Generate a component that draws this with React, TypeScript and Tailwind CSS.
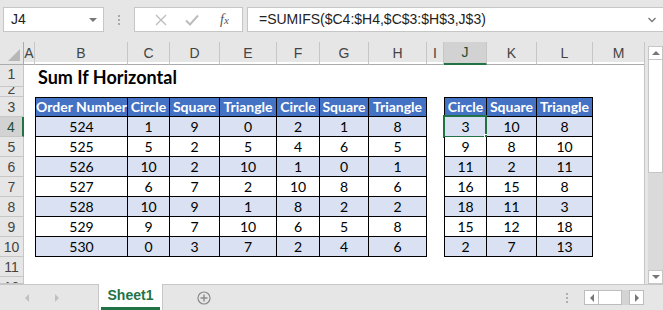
import React from "react";

const COLS =
  "grid grid-cols-[24px_11px_93px_42px_50px_57px_43px_49px_58px_17px_43px_50px_56px_52px]";
const LETTERS = ["A", "B", "C", "D", "E", "F", "G", "H", "I", "J", "K", "L", "M"];

const heads1 = ["Order Number", "Circle", "Square", "Triangle", "Circle", "Square", "Triangle"];
const heads2 = ["Circle", "Square", "Triangle"];

const data1 = [
  [524, 1, 9, 0, 2, 1, 8],
  [525, 5, 2, 5, 4, 6, 5],
  [526, 10, 2, 10, 1, 0, 1],
  [527, 6, 7, 2, 10, 8, 6],
  [528, 10, 9, 1, 8, 2, 2],
  [529, 9, 7, 10, 6, 5, 8],
  [530, 0, 3, 7, 2, 4, 6],
];
const data2 = [
  [3, 10, 8],
  [9, 8, 10],
  [11, 2, 11],
  [16, 15, 8],
  [18, 11, 3],
  [15, 12, 18],
  [2, 7, 13],
];

const rows = [
  { n: 1, h: "h-[25px]", a: "items-center" },
  { n: 2, h: "h-[10px]", a: "items-end" },
  { n: 3, h: "h-[20px]", a: "items-center" },
  { n: 4, h: "h-[20px]", a: "items-center" },
  { n: 5, h: "h-[20px]", a: "items-center" },
  { n: 6, h: "h-[20px]", a: "items-center" },
  { n: 7, h: "h-[20px]", a: "items-center" },
  { n: 8, h: "h-[20px]", a: "items-center" },
  { n: 9, h: "h-[20px]", a: "items-center" },
  { n: 10, h: "h-[20px]", a: "items-center" },
  { n: 11, h: "h-[20px]", a: "items-center" },
  { n: 12, h: "h-[7px]", a: "items-start pt-[3px]" },
];

const calibri = "font-['Lato','Liberation_Sans',sans-serif]";
const ui = "font-['Liberation_Sans','DejaVu_Sans',sans-serif]";

function Cell({ row, col }: { row: number; col: number }) {
  // col: 0 = A ... 12 = M
  const inT1 = col >= 1 && col <= 7 && row >= 3 && row <= 10;
  const inT2 = col >= 9 && col <= 11 && row >= 3 && row <= 10;

  if (row === 1 && col === 1) {
    return (
      <div className="relative">
        <span className={`absolute left-[3px] top-[2px] whitespace-nowrap text-[18px] font-bold text-black ${calibri}`}>
          Sum If Horizontal
        </span>
      </div>
    );
  }

  if (!inT1 && !inT2) return <div />;

  const first = col === 1 || col === 9;
  const header = row === 3;
  const stripe = row % 2 === 0;
  let text: string | number = "";
  if (inT1) text = header ? heads1[col - 1] : data1[row - 4][col - 1];
  if (inT2) text = header ? heads2[col - 9] : data2[row - 4][col - 9];

  const bg = header ? "bg-[#4472c4] text-white font-bold" : stripe ? "bg-[#d9e1f2] text-black" : "bg-white text-black";
  const selected = row === 4 && col === 9;

  return (
    <div
      className={`relative flex items-center justify-center whitespace-nowrap overflow-visible border-b border-r border-black text-[14px] leading-none ${calibri} ${bg} ${
        first ? "border-l" : ""
      } ${header ? "border-t" : ""}`}
    >
      {text}
      {selected && (
        <>
          <div className="absolute -left-[2px] -top-[2px] -right-[1px] -bottom-[2px] border-2 border-[#217346]" />
          <div className="absolute -right-[4px] -bottom-[4px] h-[6px] w-[6px] border border-white bg-[#217346]" />
        </>
      )}
    </div>
  );
}

function TopBar() {
  return (
    <div className={`flex h-[42px] items-start bg-[#e6e6e6] pl-[3px] pt-[7px] text-[14px] ${ui}`}>
      <div className="flex h-[25px] w-[101px] items-center justify-between border border-[#c6c6c6] bg-white pl-[7px] pr-[6px] text-[#222]">
        <span>J4</span>
        <span className="h-0 w-0 border-x-[4px] border-t-[4px] border-x-transparent border-t-[#777]" />
      </div>
      <div className="ml-[14px] mr-[14px] flex h-[25px] flex-col items-center justify-center gap-[2px]">
        <span className="h-[2px] w-[2px] bg-[#aaa]" />
        <span className="h-[2px] w-[2px] bg-[#aaa]" />
        <span className="h-[2px] w-[2px] bg-[#aaa]" />
      </div>
      <div className="flex h-[25px] w-[109px] items-center border border-[#c6c6c6] bg-white">
        <svg width="14" height="14" viewBox="0 0 14 14" className="ml-[19px]">
          <path d="M2 2 L12 12 M12 2 L2 12" stroke="#bdbdbd" strokeWidth="1.4" fill="none" />
        </svg>
        <svg width="16" height="14" viewBox="0 0 16 14" className="ml-[16px]">
          <path d="M2 7.5 L6 11.5 L14 2.5" stroke="#bdbdbd" strokeWidth="2" fill="none" />
        </svg>
        <span className="ml-[20px] font-['Liberation_Serif',serif] text-[14px] italic text-[#555]">
          f<span className="text-[11px]">x</span>
        </span>
      </div>
      <div className="ml-[4px] flex h-[25px] flex-1 items-center justify-between border border-r-0 border-[#c6c6c6] bg-white pl-[11px] pr-[6px] text-[#222]">
        <span>=SUMIFS($C4:$H4,$C$3:$H$3,J$3)</span>
        <svg width="10" height="8" viewBox="0 0 10 8">
          <path d="M1.5 2 L5 5.5 L8.5 2" stroke="#777" strokeWidth="1.3" fill="none" />
        </svg>
      </div>
    </div>
  );
}

function ColumnHeader() {
  return (
    <div className={`${COLS} h-[20px] bg-[#e6e6e6] text-[14px] text-[#444] ${ui}`}>
      <div className="relative border-b border-r border-[#ababab] bg-[#e6e6e6]">
        <div className="absolute bottom-[3px] right-[3px] h-0 w-0 border-b-[12px] border-l-[12px] border-l-transparent border-b-[#b7b7b7]" />
      </div>
      {LETTERS.map((l) => {
        const sel = l === "J";
        return (
          <div
            key={l}
            className={`flex items-center justify-center border-r border-[#c6c6c6] ${
              sel ? "border-b-2 border-b-[#217346] bg-[#d2d2d2] text-[#1e4e33]" : "border-b border-b-[#ababab]"
            }`}
          >
            {l}
          </div>
        );
      })}
    </div>
  );
}

function VScroll() {
  return (
    <div className="flex w-[18px] flex-col bg-[#e6e6e6] pl-[3px] pt-[4px]">
      <div className="flex h-[14px] items-center justify-center border border-[#c6c6c6] bg-white">
        <span className="h-0 w-0 border-x-[4px] border-b-[4px] border-x-transparent border-b-[#777]" />
      </div>
      <div className="h-[113px] border border-t-0 border-[#c6c6c6] bg-white" />
      <div className="flex-1 bg-[#dadada]" />
      <div className="flex h-[14px] items-center justify-center border border-[#c6c6c6] bg-white">
        <span className="h-0 w-0 border-x-[4px] border-t-[4px] border-x-transparent border-t-[#777]" />
      </div>
    </div>
  );
}

function TabBar() {
  return (
    <div className={`flex h-[26px] items-stretch border-t border-[#c6c6c6] bg-[#e6e6e6] ${ui}`}>
      <div className="flex w-[98px] items-center">
        <span className="ml-[25px] h-0 w-0 border-y-[4px] border-r-[4px] border-y-transparent border-r-[#c0c0c0]" />
        <span className="ml-[26px] h-0 w-0 border-y-[4px] border-l-[4px] border-y-transparent border-l-[#c0c0c0]" />
      </div>
      <div className="-mt-px flex w-[65px] flex-col border-x border-[#c6c6c6] bg-white">
        <div className="flex flex-1 items-center justify-center text-[14px] font-bold text-[#217346]">Sheet1</div>
        <div className="mx-[2px] h-[3px] bg-[#217346]" />
      </div>
      <div className="ml-[34px] flex items-center">
        <svg width="14" height="14" viewBox="0 0 14 14">
          <circle cx="7" cy="7" r="6" stroke="#8a8a8a" strokeWidth="1.2" fill="none" />
          <path d="M7 3.5 V10.5 M3.5 7 H10.5" stroke="#8a8a8a" strokeWidth="1.4" />
        </svg>
      </div>
      <div className="flex-1" />
      <div className="flex flex-col items-center justify-center gap-[2px]">
        <span className="h-[2px] w-[2px] bg-[#b0b0b0]" />
        <span className="h-[2px] w-[2px] bg-[#b0b0b0]" />
        <span className="h-[2px] w-[2px] bg-[#b0b0b0]" />
      </div>
      <div className="ml-[16px] mr-[19px] flex items-center">
        <div className="flex h-[15px] w-[15px] items-center justify-center border border-[#bdbdbd] bg-white">
          <span className="h-0 w-0 border-y-[4px] border-r-[4px] border-y-transparent border-r-[#777]" />
        </div>
        <div className="h-[15px] w-[23px] border-y border-r border-[#bdbdbd] bg-white" />
        <div className="h-[15px] w-[7px] bg-[#d4d4d4]" />
        <div className="flex h-[15px] w-[15px] items-center justify-center border border-[#bdbdbd] bg-white">
          <span className="h-0 w-0 border-y-[4px] border-l-[4px] border-y-transparent border-l-[#777]" />
        </div>
      </div>
    </div>
  );
}

export default function App() {
  return (
    <div className="h-[310px] w-[663px] overflow-hidden bg-[#e6e6e6]">
      <TopBar />
      <div className="flex h-[242px]">
        <div className="w-[645px] overflow-hidden border-r border-[#c6c6c6] bg-white">
          <ColumnHeader />
          {rows.map((r) => {
            const sel = r.n === 4;
            return (
              <div key={r.n} className={`${COLS} ${r.h}`}>
                <div
                  className={`flex justify-center overflow-hidden border-b text-[14px] leading-none ${r.a} ${ui} ${
                    sel
                      ? "border-r-2 border-b-[#c6c6c6] border-r-[#217346] bg-[#d2d2d2] text-[#1e4e33]"
                      : "border-r border-[#c6c6c6] bg-[#e6e6e6] text-[#444]"
                  }`}
                >
                  {r.n}
                </div>
                {LETTERS.map((_, i) => (
                  <Cell key={i} row={r.n} col={i} />
                ))}
              </div>
            );
          })}
        </div>
        <VScroll />
      </div>
      <TabBar />
    </div>
  );
}
